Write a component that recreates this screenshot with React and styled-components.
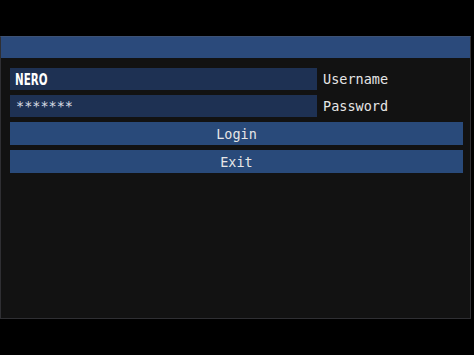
import React from "react";
import styled, { createGlobalStyle } from "styled-components";

const Global = createGlobalStyle`
  html, body { margin: 0; padding: 0; background: #000; }
  body { width: 474px; height: 355px; overflow: hidden; font-family: "DejaVu Sans Mono", monospace; }
`;

const Screen = styled.div`
  width: 474px;
  height: 355px;
  background: #000;
  padding-top: 36px;
  box-sizing: border-box;
`;

const Window = styled.div`
  width: 471px;
  height: 283px;
  box-sizing: border-box;
  border: 1px solid #2f2f33;
  border-top-color: #3d5275;
  background: #121212;
  display: flex;
  flex-direction: column;
`;

const TitleBar = styled.div`
  height: 21px;
  background: #2b4a7b;
  flex: none;
`;

const Body = styled.div`
  padding: 10px 8px 0 9px;
  display: flex;
  flex-direction: column;
  gap: 5px;
`;

const Row = styled.div`
  display: flex;
  align-items: center;
  gap: 6px;
`;

const Field = styled.div`
  width: 307px;
  height: 22px;
  background: #1e3153;
  display: flex;
  align-items: center;
  padding-left: 6px;
  box-sizing: border-box;
  color: #d6dbe3;
  font-family: "DejaVu Sans Mono", monospace;
  font-size: 13.5px;
`;

const BoldText = styled.span`
  display: inline-block;
  color: #ffffff;
  font-family: "DejaVu Sans", sans-serif;
  font-stretch: condensed;
  font-weight: 700;
  font-size: 16px;
  transform: scaleX(0.72);
  transform-origin: left center;
  margin-left: -1px;
`;

const Label = styled.span`
  color: #e6e6e6;
  font-size: 13.5px;
  font-family: "DejaVu Sans Mono", monospace;
`;

const Button = styled.div`
  width: 453px;
  height: 23px;
  background: #294a7a;
  color: #e6e6e6;
  font-size: 13.5px;
  font-family: "DejaVu Sans Mono", monospace;
  display: flex;
  align-items: center;
  justify-content: center;
`;

export default function App() {
  return (
    <Screen>
      <Global />
      <Window>
        <TitleBar />
        <Body>
          <Row>
            <Field>
              <BoldText>NERO</BoldText>
            </Field>
            <Label>Username</Label>
          </Row>
          <Row>
            <Field>*******</Field>
            <Label>Password</Label>
          </Row>
          <Button>Login</Button>
          <Button>Exit</Button>
        </Body>
      </Window>
    </Screen>
  );
}
